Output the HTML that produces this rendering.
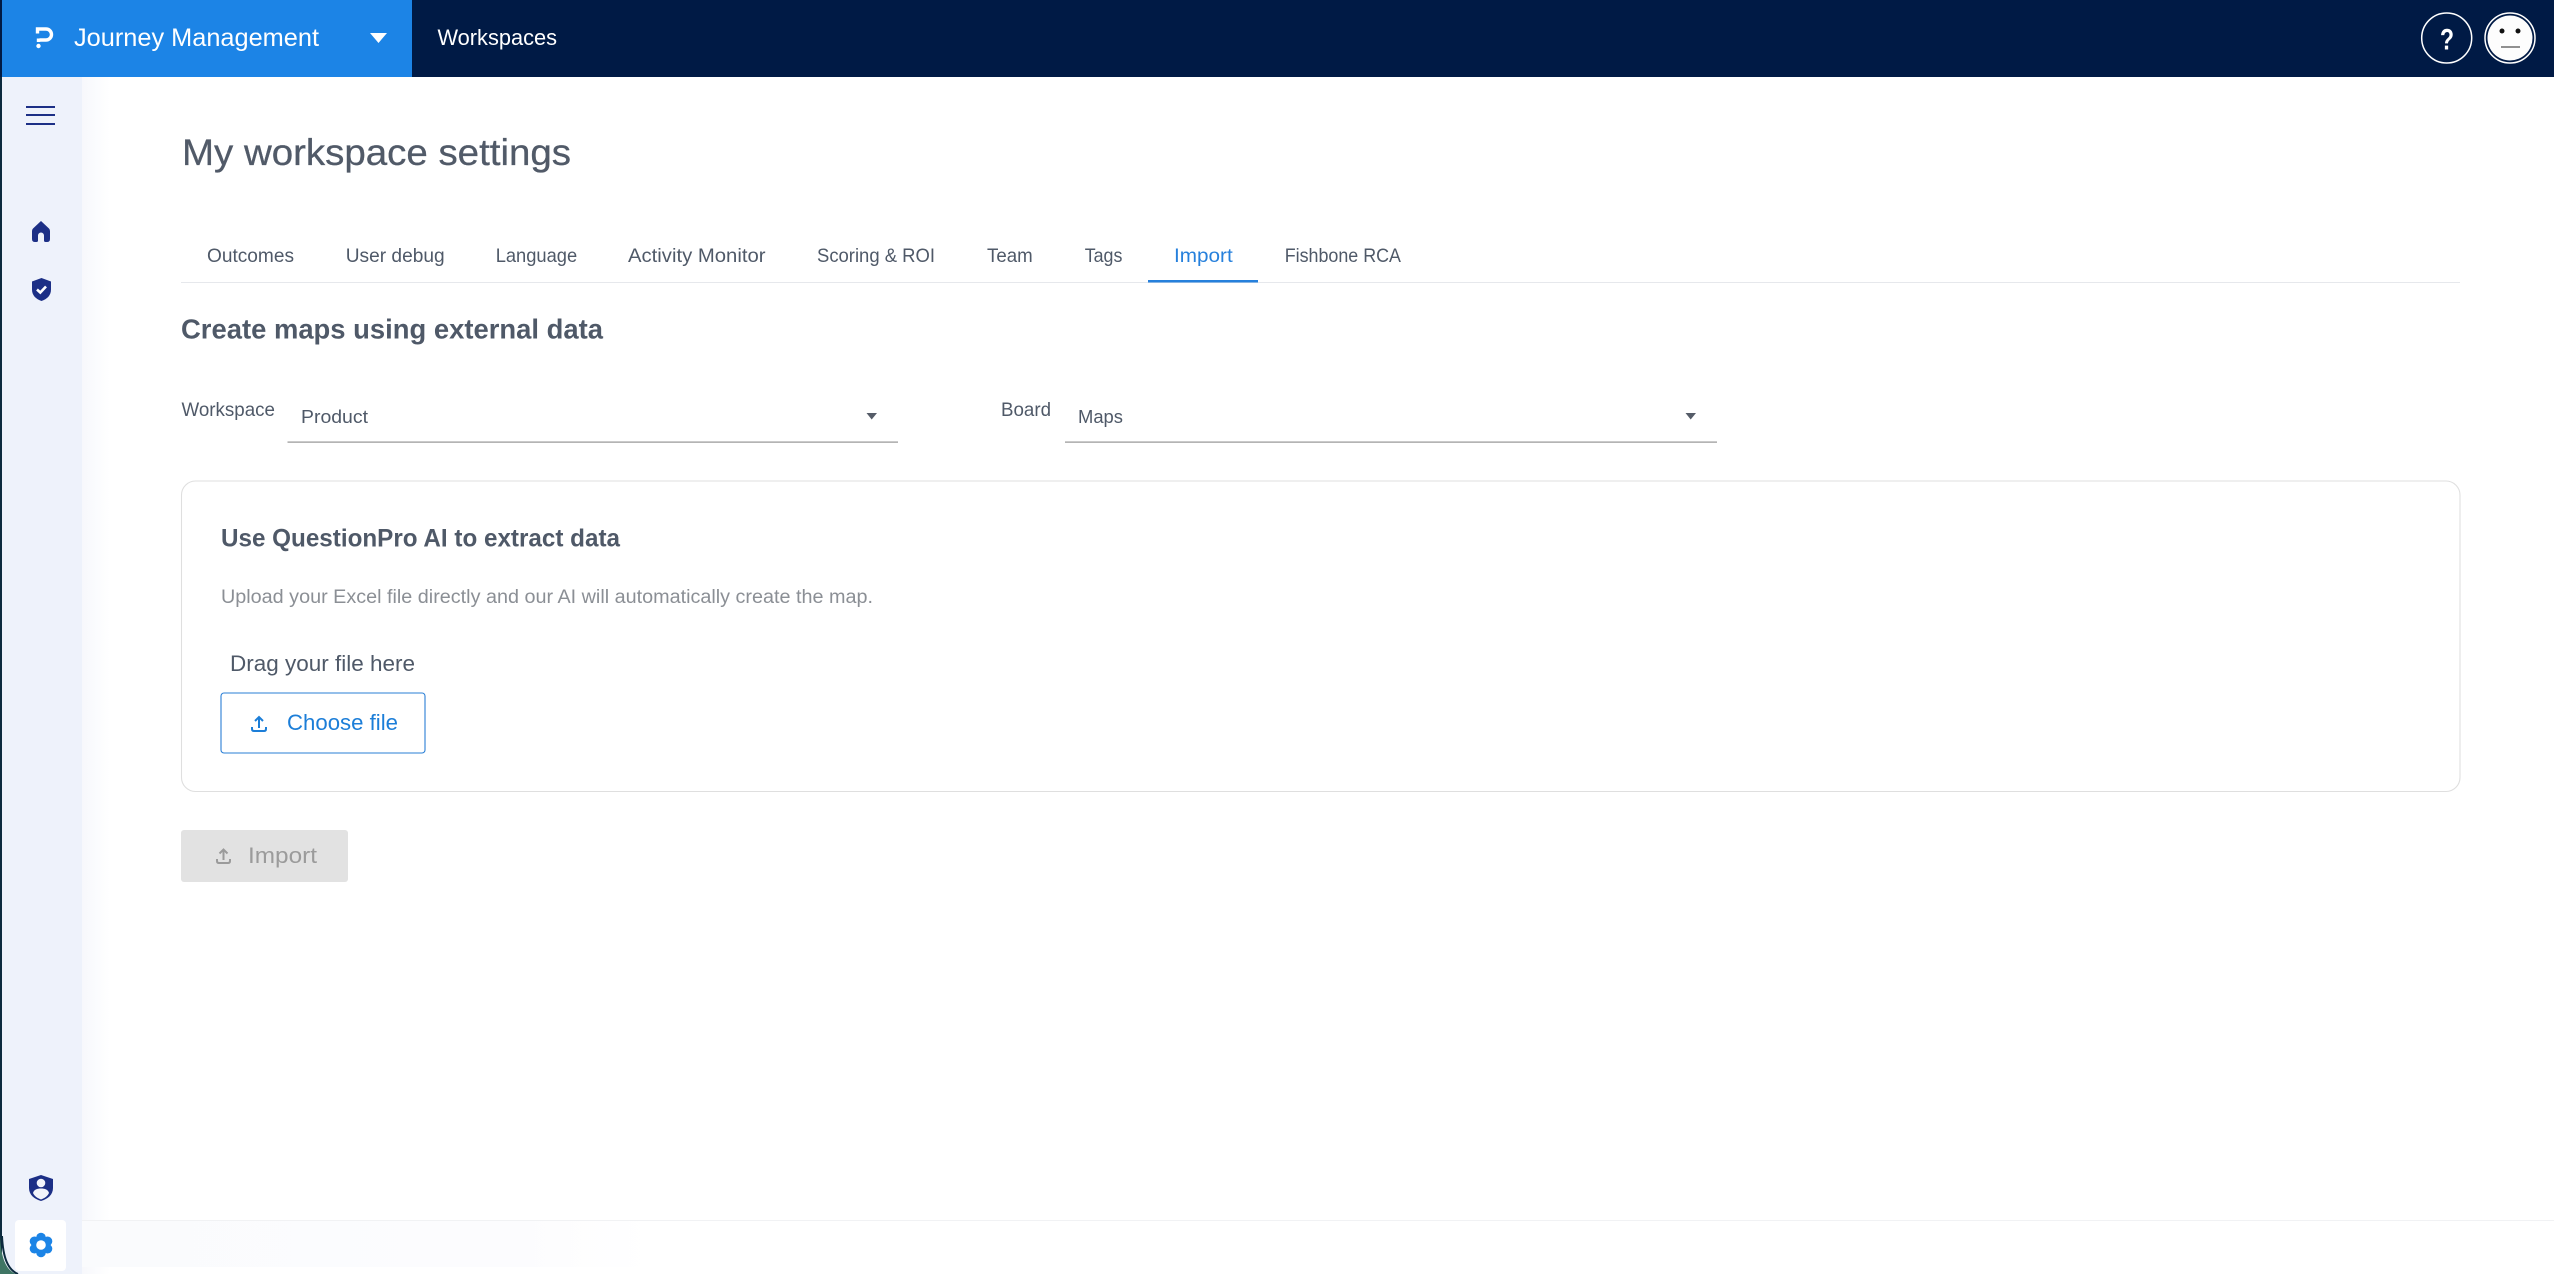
<!DOCTYPE html>
<html lang="en">
<head>
<meta charset="utf-8">
<title>My workspace settings</title>
<style>
html,body{margin:0;padding:0;background:#fff;width:2554px;height:1274px;overflow:hidden}
svg{display:block}
text{font-family:"Liberation Sans",sans-serif}
</style>
</head>
<body>
<svg width="2554" height="1274" viewBox="0 0 2554 1274" xmlns="http://www.w3.org/2000/svg">
<defs>
<linearGradient id="sh" x1="0" x2="1" y1="0" y2="0"><stop offset="0" stop-color="#f7f8fc"/><stop offset="1" stop-color="#ffffff"/></linearGradient>
<linearGradient id="fl" x1="0" x2="1" y1="0" y2="0"><stop offset="0" stop-color="#fafbfd"/><stop offset=".75" stop-color="#fcfcfe"/><stop offset="1" stop-color="#ffffff"/></linearGradient>
</defs>
<rect width="2554" height="1274" fill="#fff"/>

<!-- sidebar -->
<rect x="82" y="77" width="28" height="1197" fill="url(#sh)"/>
<rect x="2" y="77" width="80" height="1197" fill="#eef2fb"/>
<rect x="0" y="0" width="2" height="1274" fill="#0c2a3e"/>
<path d="M0 1236 C1 1258 6 1270 16 1274 H0Z" fill="#3f7564"/>
<path d="M2 1236 C3 1258 8 1270 18 1274" fill="none" stroke="#0c2a3e" stroke-width="2"/>

<!-- footer -->
<rect x="82" y="1220" width="2472" height="1" fill="#f1f2f4"/>
<rect x="82" y="1221" width="570" height="46" fill="url(#fl)"/>

<!-- top bar -->
<rect x="0" y="0" width="2554" height="77" fill="#001a45"/>
<rect x="2" y="0" width="410" height="77" fill="#1c84e6"/>
<path d="M37.500 33.500 V29 H46 a5.500 5.500 0 0 1 0 11 H39.500 M38.500 38.500 V42" fill="none" stroke="#fff" stroke-width="3.400"/>
<circle cx="38.500" cy="46" r="2.200" fill="#fff"/>
<text x="74" y="46" font-size="25" fill="#fff" textLength="245" lengthAdjust="spacingAndGlyphs">Journey Management</text>
<path d="M370 33 H387 L378.500 43Z" fill="#fff"/>
<text x="437.500" y="45" font-size="22" fill="#fff" textLength="119.500" lengthAdjust="spacingAndGlyphs">Workspaces</text>

<circle cx="2446.700" cy="38" r="25" fill="none" stroke="#fff" stroke-width="1.500"/>
<text x="2440" y="49.500" font-size="30" font-weight="700" fill="#fff" textLength="14" lengthAdjust="spacingAndGlyphs">?</text>
<circle cx="2510" cy="38" r="25" fill="#001a45" stroke="#fff" stroke-width="1.500"/>
<circle cx="2510" cy="38" r="22.500" fill="#fdfdfd"/>
<circle cx="2502" cy="31" r="2.500" fill="#111"/>
<circle cx="2518" cy="31" r="2.500" fill="#111"/>
<rect x="2501" y="46.500" width="19" height="1" fill="#222"/>

<!-- sidebar icons -->
<g fill="#1c2f86">
<rect x="26" y="106" width="29" height="2"/>
<rect x="26" y="114" width="29" height="2"/>
<rect x="26" y="123" width="29" height="2"/>
<path d="M41 221 L49 228.500 Q50 229.500 50 231 V239 Q50 242 47 242 H45.500 Q44 242 44 240.500 V235.500 A3 3 0 0 0 38 235.500 V240.500 Q38 242 36.500 242 H35 Q32 242 32 239 V231 Q32 229.500 33 228.500Z"/>
<path d="M41.500 278 L51 281.500 V289.500 C51 295 47.500 299 41.500 301 C35.500 299 32 295 32 289.500 V281.500Z"/>
<path d="M41 1175 L53 1179 V1188 C53 1194.500 48 1199 41 1201 C34 1199 29 1194.500 29 1188 V1179Z"/>
</g>
<path d="M37 289.500 L40.300 292.500 L46 286.500" fill="none" stroke="#fff" stroke-width="2.600"/>
<circle cx="41" cy="1183" r="4.300" fill="#f2f4fb"/>
<path d="M33 1193 C34 1189.500 37 1188.500 41 1188.500 C45 1188.500 48 1189.500 49 1193 C47.500 1196 45 1198 41 1199.500 C37 1198 34.500 1196 33 1193Z" fill="#f2f4fb"/>

<!-- settings button -->
<rect x="15" y="1220" width="51" height="51" rx="4" fill="#fff"/>
<g fill="#1c84e6">
<circle cx="41" cy="1245" r="8.500"/>
<circle cx="41" cy="1237.500" r="4.800"/>
<circle cx="41" cy="1252.500" r="4.800"/>
<circle cx="34.500" cy="1241.250" r="4.800"/>
<circle cx="47.500" cy="1241.250" r="4.800"/>
<circle cx="34.500" cy="1248.750" r="4.800"/>
<circle cx="47.500" cy="1248.750" r="4.800"/>
</g>
<circle cx="41" cy="1245" r="4.800" fill="#fff"/>

<!-- title -->
<text x="182" y="165" font-size="37" fill="#515a68" stroke="#515a68" stroke-width=".3" textLength="389" lengthAdjust="spacingAndGlyphs">My workspace settings</text>

<!-- tabs -->
<g font-size="19.500" fill="#4f5968">
<text x="207" y="262" textLength="87" lengthAdjust="spacingAndGlyphs">Outcomes</text>
<text x="345.700" y="262" textLength="99" lengthAdjust="spacingAndGlyphs">User debug</text>
<text x="495.700" y="262" textLength="81.500" lengthAdjust="spacingAndGlyphs">Language</text>
<text x="628" y="262" textLength="137.500" lengthAdjust="spacingAndGlyphs">Activity Monitor</text>
<text x="817" y="262" textLength="118" lengthAdjust="spacingAndGlyphs">Scoring &amp; ROI</text>
<text x="987" y="262" textLength="45.700" lengthAdjust="spacingAndGlyphs">Team</text>
<text x="1084.700" y="262" textLength="37.700" lengthAdjust="spacingAndGlyphs">Tags</text>
<text x="1174" y="262" textLength="58.700" lengthAdjust="spacingAndGlyphs" fill="#2680dc">Import</text>
<text x="1284.700" y="262" textLength="116.300" lengthAdjust="spacingAndGlyphs">Fishbone RCA</text>
</g>
<rect x="181" y="282" width="2279" height="1" fill="#e6e8ec"/>
<rect x="1148" y="280" width="110" height="2.500" fill="#2680dc"/>

<!-- heading -->
<text x="181" y="338.500" font-size="27.500" font-weight="700" fill="#4f5968" textLength="422" lengthAdjust="spacingAndGlyphs">Create maps using external data</text>

<!-- selects -->
<text x="181.500" y="416" font-size="19.500" fill="#4f5968" textLength="93.500" lengthAdjust="spacingAndGlyphs">Workspace</text>
<text x="301" y="423" font-size="18.500" fill="#4f5968" textLength="67" lengthAdjust="spacingAndGlyphs">Product</text>
<path d="M866.500 413 H877 L871.700 419.500Z" fill="#555c68"/>
<rect x="287.500" y="441.500" width="610.500" height="1.200" fill="#949494"/>
<text x="1001" y="416" font-size="19.500" fill="#4f5968" textLength="50" lengthAdjust="spacingAndGlyphs">Board</text>
<text x="1078" y="423" font-size="18.500" fill="#4f5968" textLength="45" lengthAdjust="spacingAndGlyphs">Maps</text>
<path d="M1685.500 413 H1696 L1690.700 419.500Z" fill="#555c68"/>
<rect x="1065" y="441.500" width="652" height="1.200" fill="#949494"/>

<!-- card -->
<rect x="181.500" y="481" width="2278.500" height="310.500" rx="14" fill="#fff" stroke="#dfdfdf" stroke-width="1.100"/>
<text x="221" y="546.500" font-size="25" font-weight="700" fill="#4f5968" textLength="399" lengthAdjust="spacingAndGlyphs">Use QuestionPro AI to extract data</text>
<text x="221" y="603" font-size="19" fill="#8b8f95" textLength="652" lengthAdjust="spacingAndGlyphs">Upload your Excel file directly and our AI will automatically create the map.</text>
<text x="230" y="671" font-size="22" fill="#4f5968" textLength="185" lengthAdjust="spacingAndGlyphs">Drag your file here</text>

<rect x="221" y="693" width="204" height="60" rx="3" fill="#fff" stroke="#2a7fd6" stroke-width="1.100"/>
<g fill="none" stroke="#1c7ed8" stroke-width="2">
<path d="M259 728 V717 M255 721 L259 717 L263 721"/>
<path d="M252 727 V729 Q252 731 254 731 H264 Q266 731 266 729 V727"/>
</g>
<text x="287" y="730" font-size="22" fill="#1c7ed8" textLength="111" lengthAdjust="spacingAndGlyphs">Choose file</text>

<!-- import -->
<rect x="181" y="830" width="167" height="52" rx="3" fill="#e2e2e2"/>
<g fill="none" stroke="#9b9b9b" stroke-width="2">
<path d="M223.500 860 V850 M219.500 853.500 L223.500 849.500 L227.500 853.500"/>
<path d="M217 859 V861 Q217 863 219 863 H228 Q230 863 230 861 V859"/>
</g>
<text x="248" y="863" font-size="22" fill="#9b9b9b" textLength="69" lengthAdjust="spacingAndGlyphs">Import</text>
</svg>
</body>
</html>
